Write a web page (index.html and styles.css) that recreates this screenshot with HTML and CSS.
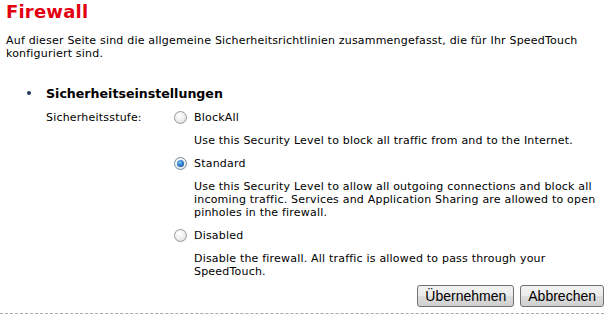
FILE: index.html
```html
<!DOCTYPE html>
<html lang="de">
<head>
<meta charset="utf-8">
<title>Firewall</title>
<link rel="stylesheet" href="styles.css">
</head>
<body>
<div class="page">
  <h1 class="title">Firewall</h1>
  <p class="intro">Auf dieser Seite sind die allgemeine Sicherheitsrichtlinien zusammengefasst, die für Ihr SpeedTouch konfiguriert sind.</p>
  <div class="section">
    <div class="section-head"><span class="bullet"></span><span class="section-title">Sicherheitseinstellungen</span></div>
    <div class="form-row">
      <div class="label">Sicherheitsstufe:</div>
      <div class="options">
        <div class="option">
          <label class="radio-line"><span class="radio"></span>BlockAll</label>
          <div class="desc">Use this Security Level to block all traffic from and to the Internet.</div>
        </div>
        <div class="option">
          <label class="radio-line"><span class="radio checked"></span>Standard</label>
          <div class="desc">Use this Security Level to allow all outgoing connections and block all incoming traffic. Services and Application Sharing are allowed to open pinholes in the firewall.</div>
        </div>
        <div class="option">
          <label class="radio-line"><span class="radio"></span>Disabled</label>
          <div class="desc">Disable the firewall. All traffic is allowed to pass through your SpeedTouch.</div>
        </div>
      </div>
    </div>
  </div>
  <div class="actions">
    <button class="btn">Übernehmen</button>
    <button class="btn">Abbrechen</button>
  </div>
</div>
</body>
</html>
```
FILE: styles.css
```css
html, body {
  margin: 0;
  padding: 0;
  background: #ffffff;
}
body {
  font-family: "DejaVu Sans", Verdana, sans-serif;
  font-size: 11px;
  line-height: 13px;
  letter-spacing: 0.2px;
  color: #000;
}
.page {
  width: 605px;
}
.title {
  margin: 0 0 0 6px;
  padding-top: 1px;
  font-size: 18px;
  line-height: 22px;
  font-weight: bold;
  letter-spacing: 0.2px;
  color: #e2000f;
}
.intro {
  margin: 11px 0 0 6px;
  width: 592px;
}
.section {
  margin-top: 25px;
  margin-left: 6px;
}
.section-head {
  display: flex;
  align-items: center;
  height: 16px;
}
.bullet {
  width: 4px;
  height: 4px;
  border-radius: 50%;
  background: #1f3a5a;
  margin-left: 21px;
  margin-right: 15px;
}
.section-title {
  font-weight: bold;
  font-size: 12.6px;
  letter-spacing: 0;
}
.form-row {
  display: flex;
  margin-top: 7px;
}
.label {
  width: 128px;
  padding-left: 40px;
  line-height: 19px;
}
.options {
  width: 430px;
}
.option {
  margin-bottom: 7px;
}
.radio-line {
  display: flex;
  align-items: center;
  height: 19px;
}
.radio {
  box-sizing: border-box;
  width: 13px;
  height: 13px;
  border-radius: 50%;
  border: 1px solid #9a9a9a;
  background: radial-gradient(circle at 40% 35%, #ffffff 0%, #f0f0f0 45%, #d6d6d6 100%);
  margin-right: 7px;
  position: relative;
}
.radio.checked {
  border-color: #7a8ea6;
}
.radio.checked::after {
  content: "";
  position: absolute;
  left: 2px;
  top: 2px;
  width: 7px;
  height: 7px;
  border-radius: 50%;
  background: radial-gradient(circle at 40% 35%, #7fc3f5 0%, #2a78c8 50%, #0e3f7a 100%);
}
.desc {
  margin-top: 7px;
  margin-left: 20px;
  width: 405px;
}
.actions {
  display: flex;
  justify-content: flex-end;
  gap: 6px;
  padding-bottom: 6px;
  border-bottom: 1px dashed #a8a8a8;
  width: 604px;
  letter-spacing: 0;
}
.btn {
  font-family: "Liberation Sans", Arial, sans-serif;
  font-size: 14px;
  height: 22px;
  padding: 0 7px;
  border: 1px solid #707070;
  border-radius: 3px;
  background: linear-gradient(#f2f2f2 0%, #ebebeb 48%, #dddddd 52%, #cfcfcf 100%);
  color: #000;
}
```
